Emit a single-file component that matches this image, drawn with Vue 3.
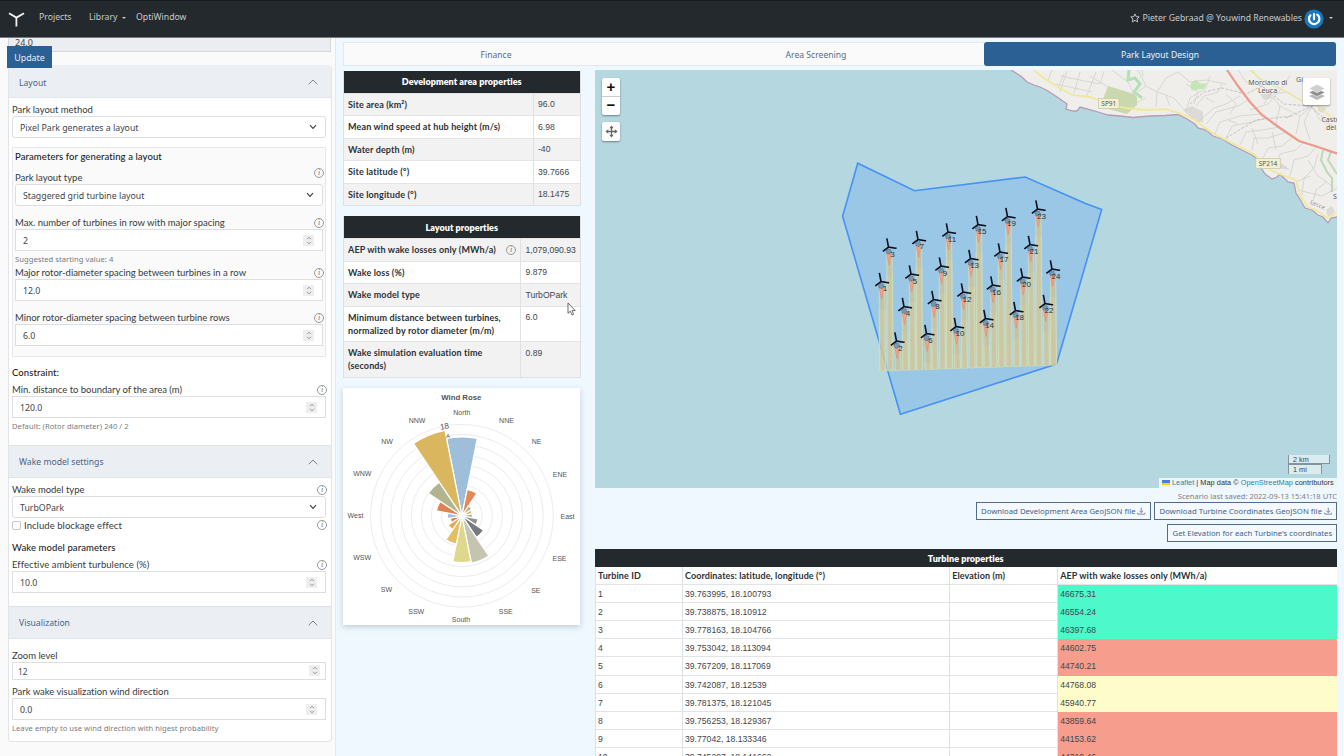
<script setup>
const devRows = [
  ['Site area (km²)', '96.0'],
  ['Mean wind speed at hub height (m/s)', '6.98'],
  ['Water depth (m)', '-40'],
  ['Site latitude (°)', '39.7666'],
  ['Site longitude (°)', '18.1475'],
]
const turbineRows = [
  [1, '39.763995, 18.100793', '46675.31', 'high'],
  [2, '39.738875, 18.10912', '46554.24', 'high'],
  [3, '39.778163, 18.104766', '46397.68', 'high'],
  [4, '39.753042, 18.113094', '44602.75', 'low'],
  [5, '39.767209, 18.117069', '44740.21', 'low'],
  [6, '39.742087, 18.12539', '44768.08', 'mid'],
  [7, '39.781375, 18.121045', '45940.77', 'mid'],
  [8, '39.756253, 18.129367', '43859.64', 'low'],
  [9, '39.77042, 18.133346', '44153.62', 'low'],
  [10, '39.745297, 18.141662', '44319.46', 'low'],
]
const turbines = [
  [1, 881, 281.5], [2, 896.5, 341], [3, 888.5, 247], [4, 904, 306.5], [5, 911, 274],
  [6, 926.5, 333.5], [7, 918, 239.5], [8, 933.5, 299.5], [9, 941, 266], [10, 956, 326.5],
  [11, 948, 232], [12, 963, 292], [13, 970.5, 258.5], [14, 985.5, 318.5], [15, 978, 224.5],
  [16, 992.5, 285], [17, 1000, 252], [18, 1015.5, 310.5], [19, 1007.5, 216.5], [20, 1022.5, 277],
  [21, 1030, 244.5], [22, 1045, 303.5], [23, 1037.5, 209], [24, 1052, 269],
]
const wakeEnd = (x) => 371 - (x - 881) * 0.034
const wake = (x, y, w) =>
  `M${x - w / 2} ${y} L${x + w / 2} ${y} L${x + w / 2 + 0.8} ${wakeEnd(x)} L${x - w / 2 + 0.3} ${wakeEnd(x)}Z`

const sectors = [
  [79, '#9fbed9'], [27, '#e38a5a'], [12, '#b1b384'], [10.5, '#dcb765'], [10.5, '#a9b59a'], [16.5, '#929293'],
  [26, '#797a80'], [48.3, '#c5c4b1'], [46.8, '#ded88c'], [28.8, '#e6bd63'], [16.5, '#e2aa54'], [12, '#df7f50'],
  [14.5, '#9fc0dd'], [26, '#de8452'], [40.5, '#b0b58f'], [87, '#dab75f'],
]
const sectorPath = (i, r) => {
  const a = ((i - 0.5) * 22.5 * Math.PI) / 180
  const b = ((i + 0.5) * 22.5 * Math.PI) / 180
  const p = (t) => `${(462.4 + r * Math.sin(t)).toFixed(2)} ${(515.8 - r * Math.cos(t)).toFixed(2)}`
  return `M462.4 515.8 L${p(a)} A${r} ${r} 0 0 1 ${p(b)}Z`
}
const compass = [
  ['North', 462.3, 412.5], ['NNE', 507, 420], ['NE', 537, 441.5], ['ENE', 560.5, 474], ['East', 568, 516],
  ['ESE', 560, 558], ['SE', 536.3, 590.5], ['SSE', 506.3, 611.5], ['South', 461.5, 619], ['SSW', 416.7, 611.5],
  ['SW', 387, 589.7], ['WSW', 362.7, 557.7], ['West', 356, 515.7], ['WNW', 362.8, 473.7], ['NW', 387.5, 441.3],
  ['NNW', 417.5, 420.3],
]
const coast =
  'M1011 70 L1016 73 1022 77 1027 82 1034 85 1040 87 1048 91 1054 95 1060 99 1067 104 1066 109 1073 111 1077 111 1080 107 1095 111 1108 115 1120 116 1133 117.5 1150 116 1165 115.5 1178 114.5 1187 119 1195 124 1198 128 1206 130 1213 136 1222 139 1232 145 1242 150 1252 155 1259 160 1260 166 1265 174 1272 179 1277 177 1280 174 1288 182 1294 183 1296 193 1301 201 1305 208 1312 210 1318 215 1323 217 1328 223 1331 218 1337 217'
const minorRoads = [
  'M1052 70 L1048 80 M1064 74 L1058 88 M1080 72 L1074 93 M1096 72 L1086 98 M1060 76 L1100 84 M1056 84 L1092 92 M1067 71 L1060 92 M1090 76 L1110 88 M1104 71 L1100 84',
  'M1112 70 L1128 82 1136 98 M1138 70 L1146 86 1157 92 1156 107 M1157 92 L1166 78 1178 72 M1157 92 L1174 98 1186 112 M1146 86 L1138 92',
  'M1178 72 L1190 82 1206 80 1226 84 M1186 110 L1190 98 1206 88 1210 76 M1196 106 L1204 96 1218 92 1222 84 M1200 120 L1214 108 1226 104 1240 96',
  'M1206 124 L1216 112 1238 106 1248 100 M1215 134 L1220 122 1240 116 1260 114 M1226 139 L1232 126 1252 122 1266 118 M1240 145 L1246 132 1262 130 1280 127',
  'M1252 150 L1254 138 1268 138 1286 132 M1262 160 L1268 148 1282 146 1292 138 M1276 168 L1280 154 1296 150 1304 142 M1290 176 L1294 160 1308 156 1316 147',
  'M1302 195 L1304 178 1314 168 1318 154 M1312 206 L1316 190 1326 182 M1296 182 L1310 176 M1298 190 L1322 196 1337 188 M1308 160 L1318 176 1332 186',
  'M1238 70 L1246 82 1262 86 1270 94 1264 104 M1252 70 L1262 82 M1270 94 L1288 92 1300 100 1312 106 M1270 94 L1280 106 1276 124 M1280 106 L1300 116 1312 106',
  'M1300 116 L1296 134 M1312 106 L1320 120 1332 126 M1312 106 L1304 122 1310 140 M1250 110 L1268 104 1282 88 1290 76 M1226 94 L1236 104 1230 114',
  'M1186 84 L1198 92 1194 104 M1166 96 L1170 106 M1146 98 L1136 103 M1206 98 L1214 102 M1228 120 L1238 124 M1252 128 L1258 144 M1272 132 L1276 150',
]
</script>

<template>
  <div class="page">
    <header class="topbar">
      <svg class="logo" viewBox="0 0 18 18"><path d="M1 2.3 L8.4 6.6 L16 2.3 M8.4 6.6 V15.5" /></svg>
      <span class="nav n1">Projects</span>
      <span class="nav n2">Library</span><i class="caret"></i>
      <span class="nav n3">OptiWindow</span>
      <div class="user">
        <svg class="star" viewBox="0 0 16 16"><path d="M8 1.5 L10 5.8 14.7 6.3 11.2 9.5 12.2 14.2 8 11.8 3.8 14.2 4.8 9.5 1.3 6.3 6 5.8Z" /></svg>
        <span>Pieter Gebraad @ Youwind Renewables</span>
        <svg class="avatar" viewBox="0 0 20 20">
          <circle cx="10" cy="10" r="9.6" fill="#1877bd" />
          <path d="M10 5 V10.3 M13.3 5.7 A5.2 5.2 0 1 1 6.4 6.3" fill="none" stroke="#fff" stroke-width="2.2" stroke-linecap="round" />
        </svg>
        <i class="caret"></i>
      </div>
    </header>

    <div class="columns">
      <aside class="side">
        <div class="cut">24.0</div>
        <button class="update">Update</button>
        <section class="accordion">
          <div class="head first"><span>Layout</span><svg viewBox="0 0 10 6"><path d="M.7 5.3 L5 1 L9.3 5.3" /></svg></div>
          <div class="body">
            <div class="label m5"><span>Park layout method</span></div>
            <div class="field select"><span>Pixel Park generates a layout</span><svg viewBox="0 0 8 6"><path d="M1 1.2 L4 4.4 L7 1.2" /></svg></div>
            <div class="group">
              <div class="title"><span>Parameters for generating a layout</span></div>
              <div class="label m8"><span>Park layout type</span><i class="info up">i</i></div>
              <div class="field select"><span>Staggered grid turbine layout</span><svg viewBox="0 0 8 6"><path d="M1 1.2 L4 4.4 L7 1.2" /></svg></div>
              <div class="label m10"><span>Max. number of turbines in row with major spacing</span><i class="info">i</i></div>
              <div class="field"><span>2</span><b class="spin"><svg viewBox="0 0 6 9"><path d="M1 3.2 L3 1.2 L5 3.2 M1 5.8 L3 7.8 L5 5.8" /></svg></b></div>
              <div class="help">Suggested starting value: 4</div>
              <div class="label"><span>Major rotor-diameter spacing between turbines in a row</span><i class="info">i</i></div>
              <div class="field"><span>12.0</span><b class="spin"><svg viewBox="0 0 6 9"><path d="M1 3.2 L3 1.2 L5 3.2 M1 5.8 L3 7.8 L5 5.8" /></svg></b></div>
              <div class="label m10"><span>Minor rotor-diameter spacing between turbine rows</span><i class="info">i</i></div>
              <div class="field"><span>6.0</span><b class="spin"><svg viewBox="0 0 6 9"><path d="M1 3.2 L3 1.2 L5 3.2 M1 5.8 L3 7.8 L5 5.8" /></svg></b></div>
            </div>
            <div class="title m8"><span>Constraint:</span></div>
            <div class="label m4"><span>Min. distance to boundary of the area (m)</span><i class="info">i</i></div>
            <div class="field"><span>120.0</span><b class="spin"><svg viewBox="0 0 6 9"><path d="M1 3.2 L3 1.2 L5 3.2 M1 5.8 L3 7.8 L5 5.8" /></svg></b></div>
            <div class="help">Default: (Rotor diameter) 240 / 2</div>
          </div>
          <div class="head wakehead"><span>Wake model settings</span><svg viewBox="0 0 10 6"><path d="M.7 5.3 L5 1 L9.3 5.3" /></svg></div>
          <div class="body">
            <div class="label m5"><span>Wake model type</span><i class="info">i</i></div>
            <div class="field select"><span>TurbOPark</span><svg viewBox="0 0 8 6"><path d="M1 1.2 L4 4.4 L7 1.2" /></svg></div>
            <div class="check"><i class="box"></i><span>Include blockage effect</span><i class="info">i</i></div>
            <div class="title m8"><span>Wake model parameters</span></div>
            <div class="label m4 loose"><span>Effective ambient turbulence (%)</span><i class="info">i</i></div>
            <div class="field"><span>10.0</span><b class="spin"><svg viewBox="0 0 6 9"><path d="M1 3.2 L3 1.2 L5 3.2 M1 5.8 L3 7.8 L5 5.8" /></svg></b></div>
          </div>
          <div class="head vishead"><span>Visualization</span><svg viewBox="0 0 10 6"><path d="M.7 5.3 L5 1 L9.3 5.3" /></svg></div>
          <div class="body last">
            <div class="label m10"><span>Zoom level</span></div>
            <div class="field short"><span>12</span><b class="spin"><svg viewBox="0 0 6 9"><path d="M1 3.2 L3 1.2 L5 3.2 M1 5.8 L3 7.8 L5 5.8" /></svg></b></div>
            <div class="label m5"><span>Park wake visualization wind direction</span></div>
            <div class="field"><span>0.0</span><b class="spin"><svg viewBox="0 0 6 9"><path d="M1 3.2 L3 1.2 L5 3.2 M1 5.8 L3 7.8 L5 5.8" /></svg></b></div>
            <div class="help">Leave empty to use wind direction with higest probability</div>
          </div>
        </section>
      </aside>

      <main class="main">
        <nav class="tabs">
          <div class="tab t1">Finance</div>
          <div class="tab t2">Area Screening</div>
          <div class="tab t3">Park Layout Design</div>
        </nav>
        <div class="content">
          <div class="middle">
            <div class="props dev">
              <div class="cap"><span>Development area properties</span></div>
              <div v-for="r in devRows" :key="r[0]" class="prow"><div class="key"><span>{{ r[0] }}</span></div><div class="val">{{ r[1] }}</div></div>
            </div>
            <div class="props lay">
              <div class="cap"><span>Layout properties</span></div>
              <div class="prow"><div class="key"><span>AEP with wake losses only (MWh/a)</span><i class="info">i</i></div><div class="val">1,079,090.93</div></div>
              <div class="prow"><div class="key"><span>Wake loss (%)</span></div><div class="val">9.879</div></div>
              <div class="prow"><div class="key"><span>Wake model type</span></div><div class="val">TurbOPark</div></div>
              <div class="prow tall"><div class="key"><span>Minimum distance between turbines,<br>normalized by rotor diameter (m/m)</span></div><div class="val">6.0</div></div>
              <div class="prow tall"><div class="key"><span>Wake simulation evaluation time<br>(seconds)</span></div><div class="val">0.89</div></div>
            </div>
            <div class="rose">
              <svg viewBox="343.5 388 237 237">
                <g fill="none" stroke="#e6e6e6" stroke-width=".8"><circle v-for="n in 9" :key="n" cx="462.4" cy="515.8" :r="n * 10.15" /></g>
                <path v-for="(s, i) in sectors" :key="i" :d="sectorPath(i, s[0])" :fill="s[1]" stroke="#fff" stroke-width="1.2" />
                <circle cx="462.4" cy="515.8" r="3.4" fill="#fff" />
                <text x="461.8" y="400" class="rt">Wind Rose</text>
                <text v-for="c in compass" :key="c[0]" :x="c[1]" :y="c[2] + 2.5" class="rl">{{ c[0] }}</text>
                <text x="445" y="429" class="rn" transform="rotate(-11 445 426)">18</text>
                <text x="448.6" y="437.5" class="ra">A</text>
              </svg>
            </div>
          </div>

          <div class="right">
            <div class="map">
              <svg class="canvas" viewBox="595 70 742 418">
                <rect x="595" y="70" width="742" height="418" fill="#b5d8e0" />
                <path :d="coast + ' L1337 70Z'" fill="#f0eeea" />
                <path d="M1108 86 L1134 94 1137 97 1137 105 1127 114 1100 107Z" fill="#cad8ae" />
                <path d="M1129 70 L1128 80 1135 78 1140 84 1134 92 1142 98" fill="none" stroke="#b4e0b5" stroke-width="3" />
                <path d="M1191 84 L1196 80 1200 84 1206 84 1204 88 1192 90Z M1142 70 L1143 76" fill="#c2e6b4" stroke="#c2e6b4" />
                <path d="M1323 150 L1321 160 1327 172 1332 178 1332 192 M1326 150 L1331 152 1328 160 1337 174" fill="none" stroke="#bed8b9" stroke-width="2" />
                <path d="M1183 110 L1192 106 1203 112 1203 122 1196 122Z M1260 94 L1270 93 1272 98 1264 100Z M1282 163 L1290 170 1278 168Z M1326 210 L1332 206 1335 212 1328 217Z M1318 106 l8 2 -2 5 -6 -2Z" fill="#dcd9d8" />
                <path v-for="r in minorRoads" :key="r" :d="r" fill="none" stroke="#d2d0cd" stroke-width=".8" />
                <path d="M1190 104 L1204 92 1222 88 1246 94 1262 86 1284 104 1310 106 1337 130 M1226 138 L1256 120 1292 116 M1286 118 L1312 106 1326 86" fill="none" stroke="#b9b6ba" stroke-width=".8" stroke-dasharray="3 1.5" />
                <path :d="coast" fill="none" stroke="#b79bb4" stroke-width="1.3" />
                <path d="M1250 70 L1262 80 1280 88 1300 100 1318 106 1337 122" fill="none" stroke="#efe6a6" stroke-width="1.6" />
                <path d="M1034 70 L1045 79 1058 87 1072 95 1090 97 1106 103 1125 108 1145 110 1165 109 1182 114 1195 120 1208 130 1216 135 1232 143 1255 155 1262 163 1272 171 1285 176 1296 180 1300 195 1308 207 1318 211 1327 218 1337 213" fill="none" stroke="#eee99d" stroke-width="1.8" />
                <path d="M1227 70 L1238 86 1250 102 1262 115 1280 128 1299 141 1318 147 1337 153.5" fill="none" stroke="#eb9a8b" stroke-width="2.2" />
                <g fill="#f3efd1" stroke="#c9c5a2" stroke-width=".7"><rect x="1098.5" y="98.5" width="20.5" height="10" /><rect x="1255.8" y="158.5" width="24.5" height="10" /></g>
                <g class="place">
                  <text x="1108.8" y="106.2" class="sign">SP91</text><text x="1268" y="166.3" class="sign">SP214</text>
                  <text x="1267.8" y="84.7">Morciano di</text><text x="1267.5" y="92.7">Leuca</text>
                  <text x="1299.5" y="82">Gi</text><text x="1330" y="121.5">Castr</text><text x="1331" y="129.5">del</text><text x="1335" y="199">S</text>
                  <text x="1317.5" y="206.5" transform="rotate(24 1317 205)" class="sea">Lecce</text>
                </g>
                <path d="M857.7 163.2 L842.6 216.3 900.4 414.3 1056.5 364 1101.7 209.5 1085.5 203.5 1025.3 177 914.5 190.8Z" fill="#3388ff" fill-opacity=".2" stroke="#4592f4" stroke-width="1.6" />
                <g fill="#c8e9d8" fill-opacity=".4"><path v-for="t in turbines" :key="t[0]" :d="wake(t[1] + 1, t[2] + 28, 7)" /></g>
                <g fill="#dcc58a" fill-opacity=".55" stroke="#d5e2b4" stroke-width=".7">
                  <path v-for="t in turbines" :key="t[0]" :d="wake(t[1] + 1, t[2] + 7, 5.4)" />
                </g>
                <g fill="#d9b989" fill-opacity=".35"><path v-for="t in turbines" :key="t[0]" :d="wake(t[1] + 1, t[2] + 9, 2.8)" /></g>
                <g v-for="t in turbines" :key="t[0]">
                  <path :d="`M${t[1] - 2} ${t[2] + 5} h5 l-1 6 l-1.3 7 l-1.5 -7Z`" fill="#f0a387" stroke="#df8c74" stroke-width=".6" />
                  <circle :cx="t[1] + 0.2" :cy="t[2] + 4.5" r="2.5" fill="#6b9dc1" stroke="#795d50" stroke-width="1" stroke-dasharray="1.5 1" />
                  <path :d="`M${t[1]} ${t[2]} l-1.5 -7.8 M${t[1]} ${t[2]} l7.3 1.2 M${t[1]} ${t[2]} l-5 3.8`" class="blades" />
                  <text :x="t[1] + 4" :y="t[2] + 9.7" class="tn">{{ t[0] }}</text>
                </g>
              </svg>
              <div class="zoomctl"><div>+</div><div>−</div></div>
              <div class="fit"><svg viewBox="0 0 14 14"><path d="M7 1.5 V12.5 M1.5 7 H12.5" stroke="#666" stroke-width="1.4" /><path d="M7 .5 L9.3 3.5 H4.7Z M7 13.5 L4.7 10.5 H9.3Z M.5 7 L3.5 4.7 V9.3Z M13.5 7 L10.5 9.3 V4.7Z" fill="#666" /></svg></div>
              <div class="layers"><svg viewBox="0 0 18 18"><path d="M1 13 L9 9.5 17 13 9 17Z" fill="#b9b9b9" /><path d="M1 9.5 L9 5.5 17 9.5 9 13.5Z" fill="#8c8c8c" stroke="#fff" stroke-width=".5" /><path d="M1 5.5 L9 1.3 17 5.5 9 9.8Z" fill="#cfcfcf" stroke="#fff" stroke-width=".5" /></svg></div>
              <div class="scale"><div class="km">2 km</div><div class="mi">1 mi</div></div>
              <div class="attr"><i class="flag"></i><span><a>Leaflet</a> | Map data © <a>OpenStreetMap</a> contributors</span></div>
            </div>
            <div class="saved"><span>Scenario last saved: 2022-09-13 15:41:18 UTC</span></div>
            <div class="actions">
              <div class="btn b1"><span>Download Development Area GeoJSON file</span><svg viewBox="0 0 9 8"><path d="M4.5 .5 V5.5 M2.5 3.7 L4.5 5.7 L6.5 3.7 M.7 5.8 V7.3 H8.3 V5.8" /></svg></div>
              <div class="btn b2"><span>Download Turbine Coordinates GeoJSON file</span><svg viewBox="0 0 9 8"><path d="M4.5 .5 V5.5 M2.5 3.7 L4.5 5.7 L6.5 3.7 M.7 5.8 V7.3 H8.3 V5.8" /></svg></div>
            </div>
            <div class="actions second"><div class="btn b3"><span>Get Elevation for each Turbine's coordinates</span></div></div>
            <div class="turbines">
              <div class="cap"><span>Turbine properties</span></div>
              <div class="trow thead"><div>Turbine ID</div><div>Coordinates: latitude, longitude (°)</div><div>Elevation (m)</div><div>AEP with wake losses only (MWh/a)</div></div>
              <div v-for="r in turbineRows" :key="r[0]" class="trow"><div>{{ r[0] }}</div><div>{{ r[1] }}</div><div></div><div :class="r[3]">{{ r[2] }}</div></div>
            </div>
          </div>
        </div>
      </main>
    </div>
    <svg class="cursor" viewBox="0 0 9 14"><path d="M1 1 V11.3 L3.3 9.2 L5 13 L6.6 12.2 L5 8.6 H8.2Z" fill="#fff" stroke="#444" stroke-width=".8" /></svg>
  </div>
</template>

<style>
body { margin: 0; overflow: hidden; }
</style>
<style scoped>
* { box-sizing: border-box; }
.page { position: relative; width: 1344px; height: 756px; overflow: hidden; background: #f0f8ff; font-family: "Noto Sans", "Open Sans", sans-serif; font-size: 9px; color: #40464c; display: flex; flex-direction: column; }
.page span { white-space: nowrap; }
.topbar { flex: none; height: 38px; background: #24292d; border-top: 1px solid #171b1e; border-bottom: 1px solid #777b7d; display: flex; align-items: center; color: #c8cacb; font-size: 8.7px; padding: 0 11px 3px 8px; }
.logo { width: 18px; height: 18px; margin-top: 4px; fill: none; stroke: #f2f2f2; stroke-width: 1.8; }
.nav { display: block; margin-top: -2px; }
.n1 { width: 50px; margin-left: 13px; }
.n2 { width: 29px; }
.n3 { margin-left: 10px; }
.caret { width: 0; height: 0; border: 2px solid transparent; border-top-color: #c8cacb; border-bottom: 0; margin-left: 4px; }
.user { margin-left: auto; display: flex; align-items: center; margin-top: 1px; }
.star { width: 10px; height: 10px; fill: none; stroke: #d4d6d7; stroke-width: 1.4; margin-right: 2px; }
.avatar { width: 20px; height: 20px; margin: 1px 0 0 2px; }
.user .caret { margin-left: 5px; }
.columns { display: flex; flex: 1; min-height: 0; }
.side { width: 336px; flex: none; background: #fafafa; border-right: 1px solid #e3e9ed; padding: 0 4px 0 8px; position: relative; }
.cut { height: 14px; width: 323px; background: #ebedf0; border: 1px solid #d5d8da; border-top: 0; line-height: 9px; padding-left: 6px; overflow: hidden; }
.update { position: absolute; left: 7px; top: 8px; width: 45px; height: 22px; border: 0; padding: 0; background: #2a6094; color: #e8eff5; font: 8.9px "Noto Sans", sans-serif; }
.accordion { width: 324px; margin-top: 13px; border: 1px solid #e1e5e9; border-top: 0; border-radius: 4px; background: #fff; }
.head { height: 33px; background: #ebeff4; border-top: 1px solid #dde1e6; border-bottom: 1px solid #e0e4e8; display: flex; justify-content: space-between; align-items: center; color: #4c6384; padding: 0 13px 0 10px; font-size: 8.65px; }
.head svg { width: 10px; height: 6px; fill: none; stroke: #777; stroke-width: .9; }
.first { border-radius: 4px 4px 0 0; height: 33px; border-top-color: #ebeff4; }
.first span { padding-top: 2px; }
.wakehead { margin-top: 12px; }
.vishead { margin-top: 13px; height: 33px; }
.body { padding: 0 5px 0 3px; display: flow-root; }
.last { padding-bottom: 6px; }
.label, .title, .check { height: 13px; display: flex; align-items: center; justify-content: space-between; font-family: Lato, sans-serif; color: #353a3e; font-size: 9.5px; line-height: 13px; letter-spacing: -.025px; }
.loose { letter-spacing: .06px; }
.title { height: 14px; color: #202428; font-weight: 500; letter-spacing: .09px; }
.m4 { margin-top: 4px; } .m5 { margin-top: 5px; } .m8 { margin-top: 8px; } .m10 { margin-top: 10px; }
.info { flex: none; width: 10px; height: 10px; margin-right: -1px; border: 1px solid #999; border-radius: 50%; font: italic 8px/8px "Liberation Serif", serif; letter-spacing: 0; text-align: center; color: #777; }
.up { margin-top: -10px; }
.field { height: 22px; border: 1px solid #dcdfe1; background: #fff; display: flex; align-items: center; justify-content: space-between; padding: 1px 7px 0 7px; font-size: 8.75px; }
.select { border-radius: 3px; padding-right: 8px; }
.select svg { width: 8px; height: 6px; margin-top: -1px; fill: none; stroke: #444; stroke-width: 1.2; }
.spin { width: 11px; height: 11px; margin: -1px 1px 0 0; background: #eeeeef; display: flex; align-items: center; justify-content: center; }
.spin svg { width: 6px; height: 9px; fill: none; stroke: #888; stroke-width: .9; }
.short { height: 18px; font-size: 8.2px; padding: 0 4px 0 5px; }
.group { margin-top: 9px; height: 210px; border: 1px solid #e6e8e9; background: #fafafa; padding: 1px 2px; }
.help { height: 13px; line-height: 13px; margin-top: 2px; color: #777b7f; font-size: 7.6px; letter-spacing: .05px; white-space: nowrap; }
.check { height: 14px; }
.check span { margin-right: auto; margin-left: 3px; letter-spacing: .06px; }
.box { width: 9px; height: 9px; border: 1px solid #c3c6c8; border-radius: 2px; background: #fff; }
.main { flex: 1; padding: 4px 7px 0 7px; min-width: 0; }
.tabs { display: flex; width: 993px; height: 24px; background: #fafafa; border: 1px solid #e1e8ec; }
.tab { display: flex; align-items: center; justify-content: center; color: #586c86; font-size: 8.6px; flex: none; padding-top: 1px; }
.t1 { width: 304px; } .t2 { width: 336px; } .t3 { width: 352px; margin: -1px 0 0 0; height: 24px; background: #2a6094; color: #f0f5f9; border-radius: 3px; padding-top: 2px; }
.content { display: flex; margin-top: 4px; }
.middle { width: 237.5px; margin-right: 14.5px; flex: none; }
.cap { background: #24292d; color: #fff; display: flex; align-items: center; justify-content: center; font: 800 9px Lato, sans-serif; letter-spacing: .05px; height: 22px; }
.props { border: 1px solid #dee1e3; border-top: 0; background: #fff; font-family: "Liberation Sans", Arial, sans-serif; font-size: 8.65px; margin-top: .5px; }
.lay { margin-top: 10px; }
.prow { display: flex; height: 22.5px; border-top: 1px solid #e2e4e5; }
.prow:nth-child(even) { background: #f2f2f2; }
.tall { height: 35.7px; }
.key { flex: 1; display: flex; justify-content: space-between; padding: 4px 4px 0 4px; font: bold 9px/13px Lato, sans-serif; letter-spacing: .13px; color: #2c3136; }
.key .info { margin: 2px 0 0 0; }
.val { width: 47px; border-left: 1px solid #dfe1e3; padding: 5.5px 0 0 4.5px; line-height: 11px; white-space: nowrap; }
.lay .val { width: 59.5px; }
.rose { margin: 10px 0 0 0; width: 237px; height: 237px; background: #fff; box-shadow: 0 2px 6px rgba(80, 100, 120, .3); }
.rose svg { display: block; width: 237px; height: 237px; }
.rose text { font-family: "Liberation Sans", Arial, sans-serif; text-anchor: middle; fill: #555; }
.rose .rt { font-size: 7.8px; font-weight: bold; }
.rose .rl { font-size: 7px; }
.rose .rn { font-size: 8px; }
.rose .ra { font-size: 6px; }
.right { width: 742px; flex: none; }
.map { position: relative; height: 417.5px; overflow: hidden; }
.canvas { display: block; width: 742px; height: 418px; }
.place text { font: 7px "Noto Sans", sans-serif; fill: #555; text-anchor: middle; stroke: #f7f5f2; stroke-width: 1px; paint-order: stroke; }
.place .sign { font-size: 6.5px; stroke: none; }
.place .sea { font-size: 6px; fill: #8c7ca0; }
.blades { stroke: #0a0f1c; stroke-width: 1.6; fill: none; stroke-linecap: square; }
.tn { font: 8px "Liberation Sans", Arial, sans-serif; text-anchor: middle; fill: #263540; }
.zoomctl, .fit, .layers { position: absolute; background: #fff; border-radius: 2px; box-shadow: 0 1px 2px rgba(0, 0, 0, .4); display: flex; align-items: center; justify-content: center; }
.zoomctl { left: 7px; top: 7.5px; width: 18px; height: 37px; flex-direction: column; font: bold 15px/18px "Liberation Sans", sans-serif; color: #111; }
.zoomctl div { height: 18.5px; width: 100%; text-align: center; }
.zoomctl div + div { border-top: 1px solid #ccc; line-height: 16px; }
.fit { left: 7px; top: 52px; width: 18px; height: 19px; }
.fit svg { width: 13px; height: 13px; }
.layers { right: 7px; top: 8px; width: 27px; height: 27px; }
.layers svg { width: 18px; height: 18px; }
.scale { position: absolute; right: 7px; bottom: 13.5px; width: 42px; font: 7.3px/9px "Liberation Sans", sans-serif; color: #444; }
.km, .mi { height: 9px; background: rgba(255, 255, 255, .5); border: 1px solid #83959a; border-top: 0; padding-left: 4px; line-height: 10px; }
.mi { width: 34px; height: 10px; border-top: 1px solid #83959a; border-bottom: 0; line-height: 9px; }
.attr { position: absolute; right: 0; bottom: 0; width: 178px; height: 10px; background: rgba(255, 255, 255, .75); display: flex; align-items: center; padding-left: 3px; font: 7.3px/10px "Liberation Sans", sans-serif; letter-spacing: .05px; color: #333; }
.attr a { color: #2588aa; }
.flag { width: 8px; height: 5px; background: linear-gradient(#4c7be1 50%, #ffd500 50%); margin-right: 2px; }
.saved { height: 15px; margin-top: 1.5px; line-height: 15px; text-align: right; color: #7b8084; font-size: 7.55px; }
.actions { display: flex; justify-content: flex-end; gap: 3px; margin-top: -2px; }
.second { margin-top: 4px; }
.btn { height: 18px; border: 1px solid #526c8e; background: #f4f9fd; color: #425f8d; display: flex; align-items: center; justify-content: space-between; font-size: 7.75px; padding: 0 4px; }
.b1 { width: 174.5px; } .b2 { width: 183.5px; padding-left: 5px; } .b3 { width: 170px; padding-left: 4.5px; }
.b2 span { letter-spacing: .04px; }
.btn svg { width: 8.5px; height: 8px; fill: none; stroke: #526c8e; stroke-width: .8; }
.turbines { margin-top: 7px; background: #fff; width: 741.5px; }
.turbines .cap { height: 18px; }
.trow { display: grid; grid-template-columns: 87px 267.2px 108px 1fr; height: 18.05px; font: 8.65px/18.4px "Liberation Sans", Arial, sans-serif; border-bottom: 1px solid #e1e4e6; }
.trow div { padding-left: 2px; border-left: 1px solid #dee2e4; white-space: nowrap; }
.thead { font: bold 9px/17px Lato, sans-serif; letter-spacing: .09px; color: #2c3136; height: 18.3px; }
.trow .high { background: #4df9ca; } .trow .low { background: #f69d8d; } .trow .mid { background: #fefccb; }
.cursor { position: absolute; left: 567px; top: 302px; width: 9px; height: 14px; }
</style>
